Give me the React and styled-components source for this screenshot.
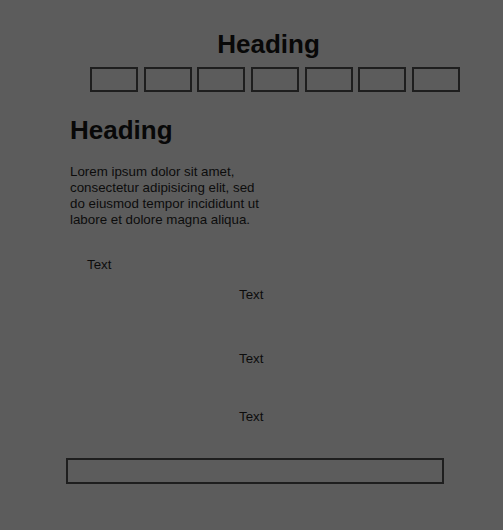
import React from "react";
import styled, { createGlobalStyle } from "styled-components";

const Global = createGlobalStyle`
  html, body { margin: 0; padding: 0; background: #5c5c5c; }
  body { font-family: "Liberation Sans", Arial, sans-serif; color: #0c0c0c; }
`;

const Page = styled.div`
  width: 503px;
  min-height: 530px;
  background: #5c5c5c;
  padding-top: 29px;
  box-sizing: border-box;
`;

const Header = styled.header`
  display: flex;
  flex-direction: column;
`;

const Title = styled.h1`
  margin: 0;
  padding-left: 34px;
  font-size: 26px;
  line-height: 30px;
  font-weight: 700;
  text-align: center;
  color: #080808;
`;

const Tabs = styled.div`
  display: flex;
  gap: 5.67px;
  margin: 8px 0 0 90px;
`;

const Tab = styled.div`
  width: 48px;
  height: 25px;
  box-sizing: border-box;
  border: 2px solid #1e1e1e;
`;

const Content = styled.main`
  margin-left: 66px;
  display: flex;
  flex-direction: column;
`;

const SubTitle = styled.h2`
  margin: 23px 0 0 4px;
  font-size: 26px;
  line-height: 30px;
  font-weight: 700;
  color: #080808;
`;

const Para = styled.p`
  margin: 18.5px 0 0 4px;
  width: 198px;
  font-size: 13.33px;
  line-height: 16px;
  color: #0c0c0c;
`;

const Label = styled.div`
  margin-top: ${(p) => p.$top}px;
  padding-left: ${(p) => p.$indent}px;
  font-size: 13.33px;
  line-height: 16px;
  color: #0c0c0c;
`;

const Field = styled.div`
  margin-top: 33.5px;
  width: 378px;
  height: 26px;
  box-sizing: border-box;
  border: 2px solid #1e1e1e;
`;

const labels = [
  { top: 29, indent: 21 },
  { top: 14, indent: 173 },
  { top: 48, indent: 173 },
  { top: 42, indent: 173 },
];

export default function App() {
  return (
    <>
      <Global />
      <Page>
        <Header>
          <Title>Heading</Title>
          <Tabs>
            {Array.from({ length: 7 }).map((_, i) => (
              <Tab key={i} />
            ))}
          </Tabs>
        </Header>
        <Content>
          <SubTitle>Heading</SubTitle>
          <Para>
            Lorem ipsum dolor sit amet, consectetur adipisicing elit, sed do
            eiusmod tempor incididunt ut labore et dolore magna aliqua.
          </Para>
          {labels.map((l, i) => (
            <Label key={i} $top={l.top} $indent={l.indent}>
              Text
            </Label>
          ))}
          <Field />
        </Content>
      </Page>
    </>
  );
}
